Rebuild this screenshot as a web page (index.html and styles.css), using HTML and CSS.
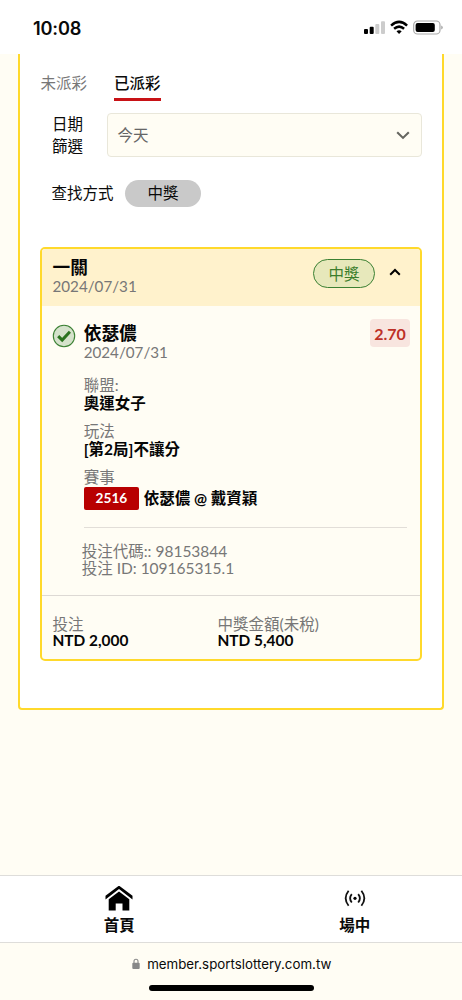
FILE: index.html
```html
<!DOCTYPE html>
<html lang="zh-Hant">
<head>
<meta charset="utf-8">
<meta name="viewport" content="width=device-width, initial-scale=1">
<title>已派彩</title>
<link rel="stylesheet" href="styles.css">
</head>
<body>
<header class="status">
  <span class="clock">10:08</span>
  <svg class="status-icons" width="80" height="16" viewBox="0 0 80 16">
    <rect x="1" y="9" width="4" height="5" rx="1"/>
    <rect x="6.7" y="6.8" width="4" height="7.2" rx="1"/>
    <rect x="12.3" y="4" width="4" height="10" rx="1" fill="#ccc"/>
    <rect x="18" y="1.2" width="4" height="12.8" rx="1" fill="#ccc"/>
    <g fill="none" stroke="#000" stroke-width="2.5">
      <path d="M28.1 5.6Q36.1-1.8 44.1 5.6"/>
      <path d="M31.1 8.8Q36.1 4.5 41.1 8.8"/>
    </g>
    <path d="M33.5 11.2Q36.1 9.2 38.7 11.2L36.1 13.9Z"/>
    <rect x="50.7" y="1" width="26.3" height="13" rx="3.8" fill="none" stroke="#aaa" stroke-width="1.2"/>
    <rect x="52.6" y="2.9" width="19.2" height="9.2" rx="2"/>
    <path d="M78.2 5.4Q79.8 6 79.8 7.5T78.2 9.6Z" fill="#aaa"/>
  </svg>
</header>
<main class="page">
  <section class="panel">
    <nav class="tabs">
      <a class="tab">未派彩</a>
      <a class="tab active">已派彩</a>
    </nav>
    <div class="filter">
      <label class="filter-label">日期<br>篩選</label>
      <div class="select">
        <span>今天</span>
        <svg width="14" height="9" viewBox="0 0 14 9"><path d="M1.2 1.2 7 6.9l5.8-5.7" fill="none" stroke="#666660" stroke-width="2.1"/></svg>
      </div>
    </div>
    <div class="search">
      <span>查找方式</span>
      <span class="chip">中獎</span>
    </div>
    <article class="card">
      <header class="card-head">
        <div>
          <h2 class="title">一關</h2>
          <p class="muted">2024/07/31</p>
        </div>
        <span class="won">中獎</span>
        <svg class="caret" width="12" height="8" viewBox="0 0 12 8"><path d="M1.2 6.8 6 2l4.8 4.8" fill="none" stroke="#000" stroke-width="2"/></svg>
      </header>
      <div class="bet">
        <svg class="check" width="24" height="24" viewBox="0 0 24 24"><circle cx="12" cy="12" r="10.7" fill="#d5e2cb" stroke="#3b8033" stroke-width="1.1"/><path d="m6.2 12.1 4 4 7.7-8.3" fill="none" stroke="#2b731f" stroke-width="3"/></svg>
        <div class="bet-main">
          <div class="bet-top">
            <div>
              <h2 class="title">依瑟儂</h2>
              <p class="muted">2024/07/31</p>
            </div>
            <span class="odds">2.70</span>
          </div>
          <dl class="facts">
            <div><dt>聯盟:</dt><dd>奧運女子</dd></div>
            <div><dt>玩法</dt><dd>[第2局]不讓分</dd></div>
            <div><dt>賽事</dt><dd class="match"><span class="code">2516</span><span>依瑟儂 @ 戴資穎</span></dd></div>
          </dl>
          <div class="ids">
            <p>投注代碼:: 98153844</p>
            <p>投注 ID: 109165315.1</p>
          </div>
        </div>
      </div>
      <dl class="totals">
        <div><dt>投注</dt><dd>NTD 2,000</dd></div>
        <div><dt>中獎金額(未稅)</dt><dd>NTD 5,400</dd></div>
      </dl>
    </article>
  </section>
</main>
<nav class="bottom">
  <a class="bottom-item home">
    <svg width="28" height="26" viewBox="0 0 28 26"><path d="M.5 13.6 14 3l13.5 10.6V9.8L14-.4.5 9.8Z"/><path d="M3.7 13.3 14 5.4l10.3 7.9V24.6h-6.8v-7.2h-6.8v7.2h-7Z"/></svg>
    <span>首頁</span>
  </a>
  <a class="bottom-item live">
    <svg width="22" height="26" viewBox="0 0 22 26"><circle cx="11" cy="12.3" r="1.6"/><g fill="none" stroke="#111" stroke-width="1.8" transform="translate(0 -.7)"><path d="M7.8 8.8Q4.4 13 7.8 17.2M14.2 8.8Q17.6 13 14.2 17.2M4.6 5.5Q-1.3 13 4.6 20.5M17.4 5.5Q23.3 13 17.4 20.5"/></g></svg>
    <span>場中</span>
  </a>
</nav>
<footer class="browser">
  <div class="url">
    <svg width="8" height="12" viewBox="0 0 8 12"><rect x=".3" y="4.8" width="7.4" height="6.2" rx="1" fill="#888"/><path d="M2 5V3.2a2 2 0 0 1 4 0V5" fill="none" stroke="#888" stroke-width="1.1"/></svg>
    <span>member.sportslottery.com.tw</span>
  </div>
  <div class="home-bar"></div>
</footer>
</body>
</html>
```
FILE: styles.css
```css
* { box-sizing: border-box; }
body {
  margin: 0;
  height: 1000px;
  display: flex;
  flex-direction: column;
  overflow: hidden;
  background: #fffdf4;
  color: #0a0a0a;
  font: 15.5px/17px Lato, "Noto Sans CJK TC", sans-serif;
}
h2, p, dl, dd { margin: 0; }
svg { display: block; flex: none; }
.status {
  height: 54px;
  padding: 1px 19px 0 33px;
  display: flex;
  align-items: center;
  justify-content: space-between;
  background: #fff;
}
.clock { font: 600 18.2px/22px Inter, sans-serif; letter-spacing: -0.2px; }
.page { flex: 1; padding: 0 18px; }
.panel {
  height: 656px;
  padding: 18px 20px 0;
  background: #fff;
  border: 2px solid #ffd92b;
  border-top: 0;
  border-radius: 0 0 4px 4px;
}
.tabs { display: flex; gap: 27px; height: 41px; padding-left: .5px; }
.tab { height: 29px; line-height: 22px; color: #777; }
.tab.active { color: #0a0a0a; font-weight: 500; border-bottom: 3px solid #c81216; }
.filter { display: flex; align-items: center; height: 44px; padding-left: 12px; }
.filter-label { width: 55px; line-height: 22px; }
.select {
  flex: 1;
  height: 44px;
  display: flex;
  align-items: center;
  justify-content: space-between;
  padding: 0 11px 0 9.5px;
  border: 1px solid #e9e7da;
  border-radius: 4px;
  background: #fffdf4;
  color: #666;
}
.search {
  display: flex;
  align-items: center;
  gap: 11.5px;
  height: 28px;
  margin-top: 22px;
  padding-left: 11.5px;
}
.chip {
  width: 76px;
  height: 27px;
  line-height: 27px;
  border-radius: 14px;
  background: #c9c9c9;
  text-align: center;
}
.card {
  height: 414px;
  margin-top: 40px;
  border: 2px solid #ffd92b;
  border-radius: 5px;
  background: #fffdf4;
  overflow: hidden;
}
.card-head {
  height: 57px;
  display: flex;
  align-items: flex-start;
  padding: 10px 19px 0 10.5px;
  background: #fff2cc;
}
.card-head .title { line-height: 18px; }
.card-head .caret { margin: 9px 0 0 14px; }
.title { font-size: 17.7px; line-height: 20px; font-weight: 700; color: #050505; }
.muted, dt, .ids { color: #777; }
.muted { font-size: 15.2px; line-height: 18px; }
.won {
  width: 62px;
  height: 29px;
  margin-left: auto;
  border: 1px solid #3b8033;
  border-radius: 15px;
  background: #e7e8bb;
  color: #3b7d2c;
  line-height: 28px;
  text-align: center;
}
.bet { display: flex; gap: 8px; padding: 17px 13px 0 9.7px; height: 289px; }
.check { margin-top: 1px; }
.bet-main { flex: 1; }
.bet-top { display: flex; justify-content: space-between; }
.bet-top .title { line-height: 21px; }
.bet-top .muted { line-height: 17px; }
.odds {
  width: 40px;
  height: 28px;
  margin: -4px -3px 0 0;
  border-radius: 4px;
  background: #f8e5df;
  color: #bd3027;
  font-size: 16px;
  font-weight: 700;
  line-height: 29px;
  text-align: center;
}
.facts { display: grid; gap: 9px; padding-top: 15px; }
.facts dt { line-height: 18px; }
.facts dd { line-height: 19px; }
.facts dd, .totals dd { font-weight: 700; color: #050505; }
.facts .match { display: flex; align-items: center; gap: 4.5px; height: 24px; }
.code {
  width: 55.5px;
  height: 23px;
  border-radius: 2px;
  background: #b80000;
  color: #fff;
  font-size: 13.7px;
  line-height: 22px;
  text-align: center;
}
.ids { margin-top: 17px; padding: 15px 0 0; border-top: 1px solid #e2ded8; }
.ids p { margin-left: -2px; }
.totals {
  display: flex;
  height: 64px;
  padding: 20px 10px 0 10.5px;
  border-top: 1px solid #ddd9d4;
}
.totals dd { line-height: 15px; font-size: 15.4px; }
.totals div:first-child { width: 165px; }
.bottom {
  height: 68px;
  display: flex;
  padding-left: 2px;
  border: solid #deddda;
  border-width: 1px 0;
  background: #fff;
  font-weight: 700;
}
.bottom-item {
  flex: 1;
  display: flex;
  flex-direction: column;
  align-items: center;
  padding-top: 10px;
}
.bottom-item span { margin-top: 3px; line-height: 20px; }
.home { padding-left: 10px; }
.live { padding-left: 21px; }
.browser { height: 57px; padding-top: 10px; }
.url {
  display: flex;
  align-items: center;
  justify-content: center;
  gap: 7px;
  height: 22px;
  padding-left: 1.5px;
  font: 13.3px/22px Inter, sans-serif;
}
.home-bar { width: 165px; height: 6px; margin: 10px auto 0; border-radius: 3px; background: #000; }
```
